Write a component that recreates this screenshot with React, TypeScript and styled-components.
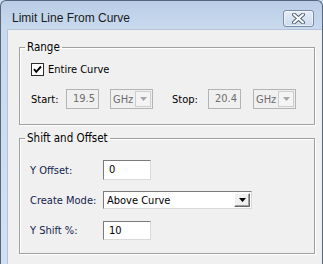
import React from 'react';
import styled, { createGlobalStyle } from 'styled-components';

const UI_FONT = `"DejaVu Sans Condensed", "DejaVu Sans", sans-serif`;

const GlobalStyle = createGlobalStyle`
  html, body {
    margin: 0;
    padding: 0;
  }
  body {
    background: #cfdff0;
    font-family: ${UI_FONT};
  }
`;

const Window = styled.div`
  width: 323px;
  height: 264px;
  box-sizing: border-box;
  border: 1px solid #56677d;
  border-bottom: none;
  border-radius: 6px 6px 0 0;
  background: linear-gradient(to bottom, #b9cde6 0px, #c9daee 28px, #d2e1f2 100%);
  display: flex;
  flex-direction: column;
  overflow: hidden;
`;

const TitleBar = styled.div`
  height: 28px;
  box-sizing: border-box;
  padding: 6px 8px 0 11px;
  display: flex;
  align-items: center;
  justify-content: space-between;
`;

const Title = styled.span`
  font-family: "Liberation Sans", sans-serif;
  font-size: 12px;
  color: #1b1b1b;
`;

const CloseButton = styled.div`
  width: 31px;
  height: 17px;
  box-sizing: border-box;
  border: 1px solid #7b8ca4;
  border-radius: 3px;
  background: linear-gradient(to bottom, #e6eef8, #cbdaec);
  box-shadow: inset 0 0 0 1px rgba(255, 255, 255, 0.55);
  display: flex;
  align-items: center;
  justify-content: center;
`;

const Client = styled.div`
  flex: 1;
  width: 308px;
  margin-left: 6px;
  border: 1px solid #b3c4d8;
  border-bottom: none;
  background: #f0f0f0;
  padding-left: 11px;
  box-sizing: content-box;
`;

const GroupBox = styled.fieldset<{ $top: number }>`
  margin: ${(p) => p.$top}px 0 0 0;
  padding: 0;
  width: 296px;
  box-sizing: border-box;
  min-width: 0;
  border: 1px solid #a0a0a0;
  box-shadow: inset 1px 1px 0 #ffffff, 1px 1px 0 #ffffff;
`;

const Legend = styled.legend`
  margin-left: 5px;
  padding: 0 2px;
  font-family: ${UI_FONT};
  font-size: 11.5px;
  line-height: 14px;
  color: #000;
`;

const GroupBody = styled.div<{ $pad: string }>`
  padding: ${(p) => p.$pad};
  display: flex;
  flex-direction: column;
`;

const Row = styled.div<{ $h: number; $gap?: number }>`
  height: ${(p) => p.$h}px;
  margin-top: ${(p) => p.$gap ?? 0}px;
  display: flex;
  align-items: center;
`;

const Label = styled.span<{ $w?: number; $navy?: boolean }>`
  width: ${(p) => (p.$w ? `${p.$w}px` : 'auto')};
  flex: none;
  font-size: 11px;
  color: ${(p) => (p.$navy ? '#141d4e' : '#000')};
  white-space: nowrap;
`;

const CheckBox = styled.span`
  width: 13px;
  height: 13px;
  box-sizing: border-box;
  border: 1px solid #2b2b2b;
  background: #fff;
  display: inline-flex;
  align-items: center;
  justify-content: center;
  margin-right: 4px;
`;

const Field = styled.div<{ $w: number; $h: number; $disabled?: boolean; $ml?: number }>`
  width: ${(p) => p.$w}px;
  height: ${(p) => p.$h}px;
  margin-left: ${(p) => p.$ml ?? 0}px;
  box-sizing: border-box;
  flex: none;
  font-size: 11px;
  line-height: ${(p) => p.$h - 2}px;
  white-space: nowrap;
  ${(p) =>
    p.$disabled
      ? `
    border: 1px solid #b4b4b4;
    background: #f0f0f0;
    color: #6d6d6d;
    padding-left: 6px;
  `
      : `
    border: 1px solid;
    border-color: #7a7a7a #d9d9d9 #d9d9d9 #7a7a7a;
    background: #fff;
    color: #000;
    padding-left: 5px;
  `}
`;

const Combo = styled.div<{ $w: number; $h: number; $disabled?: boolean; $ml?: number }>`
  width: ${(p) => p.$w}px;
  height: ${(p) => p.$h}px;
  margin-left: ${(p) => p.$ml ?? 0}px;
  box-sizing: border-box;
  flex: none;
  display: flex;
  align-items: center;
  justify-content: space-between;
  font-size: 11px;
  padding: 0 1px 0 ${(p) => (p.$disabled ? 2 : 3)}px;
  ${(p) =>
    p.$disabled
      ? `
    border: 1px solid #b4b4b4;
    background: #f0f0f0;
    color: #6d6d6d;
  `
      : `
    border: 1px solid;
    border-color: #7a7a7a #d9d9d9 #d9d9d9 #7a7a7a;
    background: #fff;
    color: #000;
  `}
`;

const DropButton = styled.span<{ $disabled?: boolean }>`
  width: 16px;
  height: calc(100% - 2px);
  box-sizing: border-box;
  display: flex;
  align-items: center;
  justify-content: center;
  ${(p) =>
    p.$disabled
      ? `
    background: #f4f4f4;
    border: 1px solid #cdcdcd;
  `
      : `
    background: #f0f0f0;
    border: 1px solid;
    border-color: #ffffff #6a6a6a #6a6a6a #ffffff;
    box-shadow: inset -1px -1px 0 #a0a0a0;
  `}
`;

const Arrow = ({ color }: { color: string }) => (
  <svg width="7" height="4" viewBox="0 0 7 4">
    <path d="M0 0 H7 L3.5 4 Z" fill={color} />
  </svg>
);

const CloseGlyph = () => (
  <svg width="13" height="11" viewBox="0 0 13 11">
    <path d="M2 1.5 L11 9.5 M11 1.5 L2 9.5" stroke="#53627a" strokeWidth="4" strokeLinecap="round" />
    <path d="M2 1.5 L11 9.5 M11 1.5 L2 9.5" stroke="#ffffff" strokeWidth="2" strokeLinecap="round" />
  </svg>
);

const CheckMark = () => (
  <svg width="9" height="9" viewBox="0 0 9 9">
    <path d="M1 4.2 L3.3 6.8 L8 1.5" stroke="#000" strokeWidth="1.9" fill="none" />
  </svg>
);

const App: React.FC = (): JSX.Element => {
  return (
    <>
      <GlobalStyle />
      <Window>
        <TitleBar>
          <Title>Limit Line From Curve</Title>
          <CloseButton>
            <CloseGlyph />
          </CloseButton>
        </TitleBar>
        <Client>
          <GroupBox $top={10}>
            <Legend>Range</Legend>
            <GroupBody $pad="7px 0 15px 11px">
              <Row $h={16}>
                <CheckBox>
                  <CheckMark />
                </CheckBox>
                <Label>Entire Curve</Label>
              </Row>
              <Row $h={20} $gap={12}>
                <Label $w={35}>Start:</Label>
                <Field $w={33} $h={20} $disabled>19.5</Field>
                <Combo $w={43} $h={20} $ml={11} $disabled>
                  GHz
                  <DropButton $disabled>
                    <Arrow color="#a6a6a6" />
                  </DropButton>
                </Combo>
                <Label $w={36} style={{ marginLeft: 19 }}>Stop:</Label>
                <Field $w={33} $h={20} $disabled>20.4</Field>
                <Combo $w={43} $h={20} $ml={12} $disabled>
                  GHz
                  <DropButton $disabled>
                    <Arrow color="#a6a6a6" />
                  </DropButton>
                </Combo>
              </Row>
            </GroupBody>
          </GroupBox>
          <GroupBox $top={6}>
            <Legend>Shift and Offset</Legend>
            <GroupBody $pad="15px 0 13px 10px">
              <Row $h={20}>
                <Label $w={73} $navy>Y Offset:</Label>
                <Field $w={48} $h={20}>0</Field>
              </Row>
              <Row $h={18} $gap={11}>
                <Label $w={73} $navy>Create Mode:</Label>
                <Combo $w={149} $h={18}>
                  Above Curve
                  <DropButton>
                    <Arrow color="#000" />
                  </DropButton>
                </Combo>
              </Row>
              <Row $h={19} $gap={12}>
                <Label $w={73} $navy>Y Shift %:</Label>
                <Field $w={48} $h={19}>10</Field>
              </Row>
            </GroupBody>
          </GroupBox>
        </Client>
      </Window>
    </>
  );
};

export default App;
